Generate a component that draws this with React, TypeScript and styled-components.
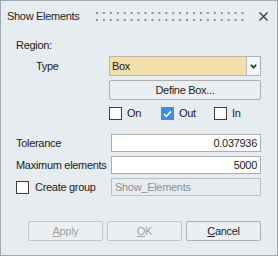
import styled, { createGlobalStyle } from 'styled-components';

const GlobalStyle = createGlobalStyle`
  html, body {
    margin: 0;
    padding: 0;
  }
  body {
    font-family: "Liberation Sans", Arial, sans-serif;
    font-size: 11px;
  }
`;

const Window = styled.div`
  width: 278px;
  height: 256px;
  box-sizing: border-box;
  border: 1px solid #a4a8ab;
  background-color: #e6ecf0;
  color: #1b1b1b;
  letter-spacing: -0.3px;
  display: flex;
  flex-direction: column;
`;

const TitleBar = styled.div`
  height: 30px;
  display: flex;
  align-items: center;
  padding: 0 9px 0 6px;
`;

const Title = styled.span`
  font-size: 11px;
  color: #1e1e1e;
`;

const Grip = styled.svg`
  margin-left: 16px;
  margin-right: 13px;
  flex: 1;
  height: 9px;
`;

const CloseIcon = styled.svg`
  width: 9px;
  height: 9px;
`;

const Body = styled.div`
  padding: 8px 16px 0 15px;
  display: flex;
  flex-direction: column;
`;

const SectionLabel = styled.div`
  line-height: 13px;
`;

const TypeRow = styled.div`
  margin-top: 4px;
  display: grid;
  grid-template-columns: 93px 152px;
  align-items: center;
`;

const TypeLabel = styled.span`
  padding-left: 20px;
`;

const Combo = styled.div`
  height: 20px;
  display: flex;
`;

const ComboField = styled.div`
  flex: 1;
  box-sizing: border-box;
  background-color: #f2dfab;
  border: 1px solid #b9b6ab;
  padding-left: 2px;
  display: flex;
  align-items: center;
`;

const DropButton = styled.div`
  width: 14px;
  box-sizing: border-box;
  border: 1px solid #adb0b2;
  border-left: none;
  background-color: #f4f6f7;
  display: flex;
  align-items: center;
  justify-content: center;
`;

const Indented = styled.div<{ $top: number }>`
  margin-left: 93px;
  margin-top: ${(p) => p.$top}px;
`;

const Button = styled.button<{ $width?: number }>`
  width: ${(p) => (p.$width ? `${p.$width}px` : '100%')};
  height: 20px;
  box-sizing: border-box;
  padding: 0;
  border: 1px solid #adb0b3;
  border-radius: 2px;
  background-color: #ebeff1;
  font: inherit;
  letter-spacing: inherit;
  color: #1b1b1b;
  &:disabled {
    color: #a0a3a5;
    border-color: #c3c6c8;
  }
`;

const CheckRow = styled.div`
  display: grid;
  grid-template-columns: 52px 53px auto;
`;

const CheckItem = styled.label<{ $gap?: number }>`
  display: flex;
  align-items: center;
  gap: ${(p) => p.$gap ?? 5}px;
  line-height: 13px;
`;

const Box = styled.span<{ $checked?: boolean }>`
  width: 13px;
  height: 13px;
  box-sizing: border-box;
  border: 1px solid ${(p) => (p.$checked ? '#3a8ee6' : '#3c3c3c')};
  background-color: ${(p) => (p.$checked ? '#3a8ee6' : '#ffffff')};
  display: flex;
  align-items: center;
  justify-content: center;
`;

const Fields = styled.div`
  margin-top: 14px;
  display: grid;
  grid-template-columns: 95px 150px;
  grid-auto-rows: 18px;
  row-gap: 4px;
  align-items: center;
`;

const Input = styled.input<{ $right?: boolean }>`
  height: 18px;
  width: 100%;
  box-sizing: border-box;
  margin: 0;
  border: 1px solid #abaeb1;
  background-color: #ffffff;
  padding: 0 3px;
  font: inherit;
  letter-spacing: inherit;
  color: #1b1b1b;
  text-align: ${(p) => (p.$right ? 'right' : 'left')};
  outline: none;
  &:disabled {
    background-color: #e6ecf0;
    border-color: #bcbfc2;
    color: #8e9193;
  }
`;

const Actions = styled.div`
  margin-top: 25px;
  display: flex;
  justify-content: flex-end;
  gap: 4px;
`;

function Check({ checked, label, gap }: { checked?: boolean; label: string; gap?: number }) {
  return (
    <CheckItem $gap={gap}>
      <Box $checked={checked}>
        {checked && (
          <svg width="9" height="8" viewBox="0 0 9 8">
            <path d="M1 4.2 L3.4 6.4 L8 1.4" stroke="#fff" strokeWidth="1.7" fill="none" />
          </svg>
        )}
      </Box>
      <span>{label}</span>
    </CheckItem>
  );
}

export default function App() {
  const cols = Array.from({ length: 22 }, (_, i) => i * 7);

  return (
    <>
      <GlobalStyle />
      <Window>
        <TitleBar>
          <Title>Show Elements</Title>
          <Grip viewBox="0 0 152 9" preserveAspectRatio="xMinYMid meet">
            {cols.map((x) => (
              <g key={x} fill="#8c8f92">
                <rect x={x} y={0} width={2} height={2} />
                <rect x={x} y={7} width={2} height={2} />
              </g>
            ))}
          </Grip>
          <CloseIcon viewBox="0 0 9 9">
            <path d="M0.5 0.5 L8.5 8.5 M8.5 0.5 L0.5 8.5" stroke="#333" strokeWidth="1.2" />
          </CloseIcon>
        </TitleBar>
        <Body>
          <SectionLabel>Region:</SectionLabel>
          <TypeRow>
            <TypeLabel>Type</TypeLabel>
            <Combo>
              <ComboField>Box</ComboField>
              <DropButton>
                <svg width="7" height="5" viewBox="0 0 7 5">
                  <path d="M0.8 0.8 L3.5 3.6 L6.2 0.8" stroke="#222" strokeWidth="1.6" fill="none" />
                </svg>
              </DropButton>
            </Combo>
          </TypeRow>
          <Indented $top={4}>
            <Button>Define Box...</Button>
          </Indented>
          <Indented $top={7}>
            <CheckRow>
              <Check label="On" />
              <Check label="Out" checked />
              <Check label="In" />
            </CheckRow>
          </Indented>
          <Fields>
            <span>Tolerance</span>
            <Input $right readOnly value="0.037936" />
            <span>Maximum elements</span>
            <Input $right readOnly value="5000" />
            <Check label="Create group" gap={6} />
            <Input disabled value="Show_Elements" />
          </Fields>
          <Actions>
            <Button $width={75} disabled>
              <u>A</u>pply
            </Button>
            <Button $width={75} disabled>
              <u>O</u>K
            </Button>
            <Button $width={75}>
              <u>C</u>ancel
            </Button>
          </Actions>
        </Body>
      </Window>
    </>
  );
}
